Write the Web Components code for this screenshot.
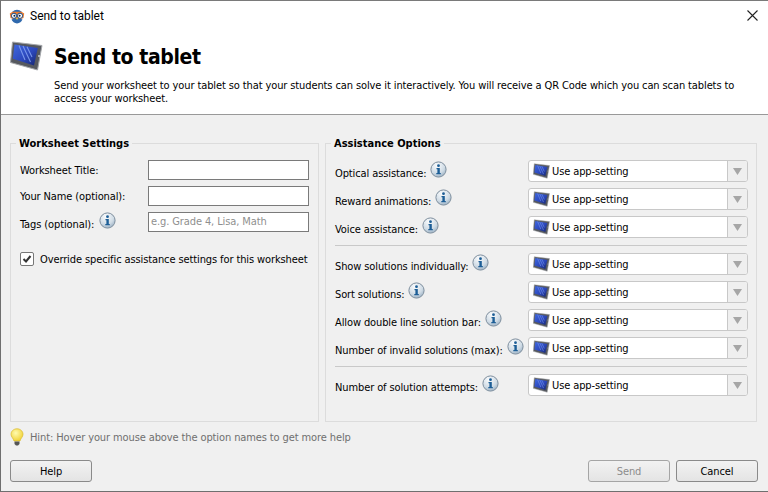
<!DOCTYPE html>
<html>
<head>
<meta charset="utf-8">
<title>Send to tablet</title>
<style>
  html, body { margin: 0; height: 100%; overflow: hidden; }
  body { font: 11px "DejaVu Sans", sans-serif; font-stretch: condensed; color: #000; }
</style>
</head>
<body>
<send-dialog>
  <title-bar>Send to tablet</title-bar>
  <dialog-header heading="Send to tablet">Send your worksheet to your tablet so that your students can solve it interactively. You will receive a QR Code which you can scan tablets to access your worksheet.</dialog-header>
  <dialog-body>
    <group-box slot="left" legend="Worksheet Settings">
      <form-row label="Worksheet Title:"><text-field></text-field></form-row>
      <form-row label="Your Name (optional):"><text-field></text-field></form-row>
      <form-row label="Tags (optional):" info><text-field placeholder="e.g. Grade 4, Lisa, Math"></text-field></form-row>
      <check-row>Override specific assistance settings for this worksheet</check-row>
    </group-box>
    <group-box slot="right" legend="Assistance Options">
      <option-row label="Optical assistance:"></option-row>
      <option-row label="Reward animations:"></option-row>
      <option-row label="Voice assistance:"></option-row>
      <h-rule></h-rule>
      <option-row label="Show solutions individually:"></option-row>
      <option-row label="Sort solutions:"></option-row>
      <option-row label="Allow double line solution bar:"></option-row>
      <option-row label="Number of invalid solutions (max):"></option-row>
      <h-rule></h-rule>
      <option-row label="Number of solution attempts:"></option-row>
    </group-box>
  </dialog-body>
  <hint-line>Hint: Hover your mouse above the option names to get more help</hint-line>
  <button-bar>
    <app-button slot="left">Help</app-button>
    <app-button slot="right" disabled>Send</app-button>
    <app-button slot="right">Cancel</app-button>
  </button-bar>
</send-dialog>

<script>
const FONT = '"DejaVu Sans", sans-serif';

// gradient ids resolve per shadow tree, so each svg carries its own defs
function tabletSvg(w, h) {
  return `<svg width="${w}" height="${h}" viewBox="0 0 33 30" style="display:block">
    <defs><linearGradient id="screen" x1="0" y1="0" x2="1" y2="1">
      <stop offset="0" stop-color="#3f68e0"/><stop offset=".55" stop-color="#2c48bc"/><stop offset="1" stop-color="#16266e"/>
    </linearGradient></defs>
    <path d="M2.500 1 32 4.500 27.500 29 .5 21.500Z" fill="#56595f" stroke="#a4a7ab" stroke-width="1" stroke-linejoin="round"/>
    <path d="M4.500 3.500 27.800 7 24 24.500 2.800 17.800Z" fill="url(#screen)"/>
    <path d="M9 4.500 15 19M13 5 20.500 21M17 5.700 22 16" stroke="#86a3f2" stroke-width="1.100" fill="none" opacity=".85"/>
    <circle cx="29" cy="15" r=".9" fill="#d4d7dc"/>
  </svg>`;
}

function define(name, css, html) {
  customElements.define(name, class extends HTMLElement {
    constructor() {
      super();
      this.attachShadow({ mode: 'open' });
    }
    connectedCallback() {
      const body = typeof html === 'function' ? html(this) : html;
      this.shadowRoot.innerHTML = `<style>${css}</style>${body}`;
    }
  });
}

define('send-dialog', `
  :host { display: flex; flex-direction: column; box-sizing: border-box; width: 768px; height: 492px;
    background: #f0f0f0; border: 1px solid #6f6f6f; border-top-color: #7a7a7a; border-right: 0;
    font: 11px ${FONT}; font-stretch: condensed; letter-spacing: -.11px; color: #000; overflow: hidden; }
`, `<slot></slot>`);

define('title-bar', `
  :host { display: flex; align-items: center; height: 29px; flex: none; background: #fff; padding-left: 8px; }
  .owl { margin-right: 5px; display: block; }
  span { flex: 1; font: 12px/14px Roboto, sans-serif; letter-spacing: 0; padding-top: 1px; }
  .x { width: 31px; height: 29px; display: flex; align-items: center; justify-content: center; }
`, `
  <svg class="owl" width="16" height="16" viewBox="0 0 16 16">
    <path d="M3 4Q8 -.5 13 4L11 5H5Z" fill="#2f69ad"/>
    <path d="M.8 5.500 3.500 3.800H12.500L15.200 5.500 14.500 10Q8 13 1.500 10Z" fill="#ea7a2c"/>
    <path d="M2.500 11.500Q8 9 13.500 11.500 12 15 8 15.500 4 15 2.500 11.500Z" fill="#2f69ad"/>
    <circle cx="5" cy="7.800" r="2.600" fill="#fff" stroke="#1f4f88" stroke-width="1"/>
    <circle cx="11" cy="7.800" r="2.600" fill="#fff" stroke="#1f4f88" stroke-width="1"/>
    <circle cx="5.400" cy="7.800" r="1" fill="#12243a"/><circle cx="10.600" cy="7.800" r="1" fill="#12243a"/>
    <path d="M6.900 10h2.200L8 12Z" fill="#f2c230"/>
  </svg>
  <span><slot></slot></span>
  <div class="x"><svg width="11" height="11" viewBox="0 0 11 11"><path d="M.5.500 10.500 10.500M10.500.500.500 10.500" stroke="#222" stroke-width="1.100"/></svg></div>
`);

define('dialog-header', `
  :host { display: block; flex: none; height: 85px; box-sizing: border-box; background: #fff; border-bottom: 1px solid #999; }
  .wrap { display: grid; grid-template-columns: 44px 1fr; padding: 12px 20px 0 9px; }
  .wrap > svg { margin-top: -1px; }
  h1 { margin: 0; font: 700 21px/30px ${FONT}; font-stretch: condensed; letter-spacing: -.4px; }
  p { grid-column: 2; margin: 7px 0 0; font-size: 11px; line-height: 13px; }
`, el => `<div class="wrap">${tabletSvg(33, 30)}<h1>${el.getAttribute('heading')}</h1><p><slot></slot></p></div>`);

define('dialog-body', `
  :host { display: grid; grid-template-columns: 309px 432px; column-gap: 6px; flex: none; padding: 28px 0 0 9px; height: 279px; }
`, `<slot name="left"></slot><slot name="right"></slot>`);

define('group-box', `
  :host { display: block; box-sizing: border-box; border: 1px solid #dcdcdc; height: 279px; position: relative; padding: 16px 9px 0; }
  .legend { position: absolute; top: -8px; left: 5px; padding: 0 3px; background: #f0f0f0; font-weight: 700; font-size: 11px; line-height: 15px; letter-spacing: 0; }
`, el => `<div class="legend">${el.getAttribute('legend')}</div><slot></slot>`);

define('info-icon', `
  :host { display: inline-block; width: 17px; height: 17px; flex: none; }
  svg { display: block; }
`, `<svg width="17" height="17" viewBox="0 0 17 17">
  <defs><radialGradient id="info" cx=".4" cy=".25" r=".85">
    <stop offset="0" stop-color="#fbfcfd"/><stop offset=".6" stop-color="#cfdbe5"/><stop offset="1" stop-color="#8ba4ba"/>
  </radialGradient></defs>
  <circle cx="8.500" cy="8.500" r="7.600" fill="url(#info)" stroke="#7f8f9e"/>
  <circle cx="8.500" cy="4.700" r="1.400" fill="#1d5e96"/>
  <path d="M6.500 7H9.800V12H10.800V13.300H6.300V12H7.400V8.200H6.500Z" fill="#1d5e96"/>
</svg>`);

define('form-row', `
  :host { display: grid; grid-template-columns: 128px 161px; height: 20px; margin-bottom: 6px; align-items: center; }
  label { display: flex; align-items: center; gap: 5px; white-space: nowrap; }
  label.info span { margin-top: 4px; }
  info-icon { margin-top: -3px; }
`, el => `<label class="${el.hasAttribute('info') ? 'info' : ''}"><span>${el.getAttribute('label')}</span>${el.hasAttribute('info') ? '<info-icon></info-icon>' : ''}</label><slot></slot>`);

define('text-field', `
  :host { display: block; box-sizing: border-box; height: 20px; background: #fff; border: 1px solid #7a7a7a; padding: 0 2px; line-height: 18px; color: #8f8f8f; overflow: hidden; white-space: nowrap; font-size: 11px; }
`, el => el.getAttribute('placeholder') || '');

define('check-row', `
  :host { display: flex; align-items: center; gap: 6px; margin-top: 19px; height: 16px; white-space: nowrap; }
  .box { box-sizing: border-box; width: 14px; height: 14px; background: #fff; border: 1px solid #777; border-radius: 2px; flex: none; }
  svg { display: block; margin: 1px; }
`, `<div class="box"><svg width="10" height="10" viewBox="0 0 10 10"><path d="M1.500 5 4 7.500 8.500 2" fill="none" stroke="#333" stroke-width="2"/></svg></div><span><slot></slot></span>`);

define('option-row', `
  :host { display: grid; grid-template-columns: 193px 220px; height: 22px; margin-bottom: 6px; align-items: center; }
  label { display: flex; align-items: center; gap: 4px; white-space: nowrap; }
  span { margin-top: 4px; }
  info-icon { margin-top: -4px; }
`, el => `<label><span>${el.getAttribute('label')}</span><info-icon></info-icon></label><app-combo></app-combo>`);

define('app-combo', `
  :host { display: flex; box-sizing: border-box; height: 22px; background: #fff; border: 1px solid #c8c8c8; border-radius: 3px; align-items: center; }
  .val { flex: 1; display: flex; align-items: center; gap: 2px; padding-left: 4px; }
  .arrow { width: 19px; height: 20px; border-left: 1px solid #c8c8c8; background: #efefef; display: flex; align-items: center; justify-content: center; border-radius: 0 2px 2px 0; }
`, `<div class="val">${tabletSvg(17, 16)}<span>Use app-setting</span></div>
  <div class="arrow"><svg width="9" height="7" viewBox="0 0 9 7"><path d="M0 0H9L4.500 7Z" fill="#a6a6a6"/></svg></div>`);

define('h-rule', `
  :host { display: block; height: 1px; background: #c9c9c9; margin: 7px 0; }
`, ``);

define('hint-line', `
  :host { display: flex; align-items: center; gap: 6px; flex: none; height: 18px; margin: 6px 0 0 9px; color: #6f6f6f; font-size: 11px; }
  svg { display: block; }
`, `<svg width="14" height="18" viewBox="0 0 14 18">
    <defs><radialGradient id="bulb" cx=".4" cy=".35" r=".7">
      <stop offset="0" stop-color="#fffbb0"/><stop offset="1" stop-color="#f0d030"/>
    </radialGradient></defs>
    <path d="M7 .8C3.500.8 1 3.300 1 6.300 1 8.800 3.300 10.300 4 13H10C10.700 10.300 13 8.800 13 6.300 13 3.300 10.500.8 7 .8Z" fill="url(#bulb)" stroke="#d8b92c" stroke-width=".7"/>
    <path d="M4.500 13.500H9.500V16L8 17.500H6L4.500 16Z" fill="#555"/>
  </svg><span><slot></slot></span>`);

define('button-bar', `
  :host { display: flex; justify-content: space-between; flex: none; margin: 14px 10px 0 9px; }
  div { display: flex; gap: 6px; }
`, `<div><slot name="left"></slot></div><div><slot name="right"></slot></div>`);

define('app-button', `
  :host { display: flex; box-sizing: border-box; width: 82px; height: 22px; align-items: center; justify-content: center;
    border: 1px solid #8a8a8a; border-radius: 3px; background: linear-gradient(#f2f2f2, #e4e4e4); font-size: 11px; }
  :host([disabled]) { color: #8c8c8c; border-color: #a5a5a5; }
`, `<slot></slot>`);
</script>
</body>
</html>
